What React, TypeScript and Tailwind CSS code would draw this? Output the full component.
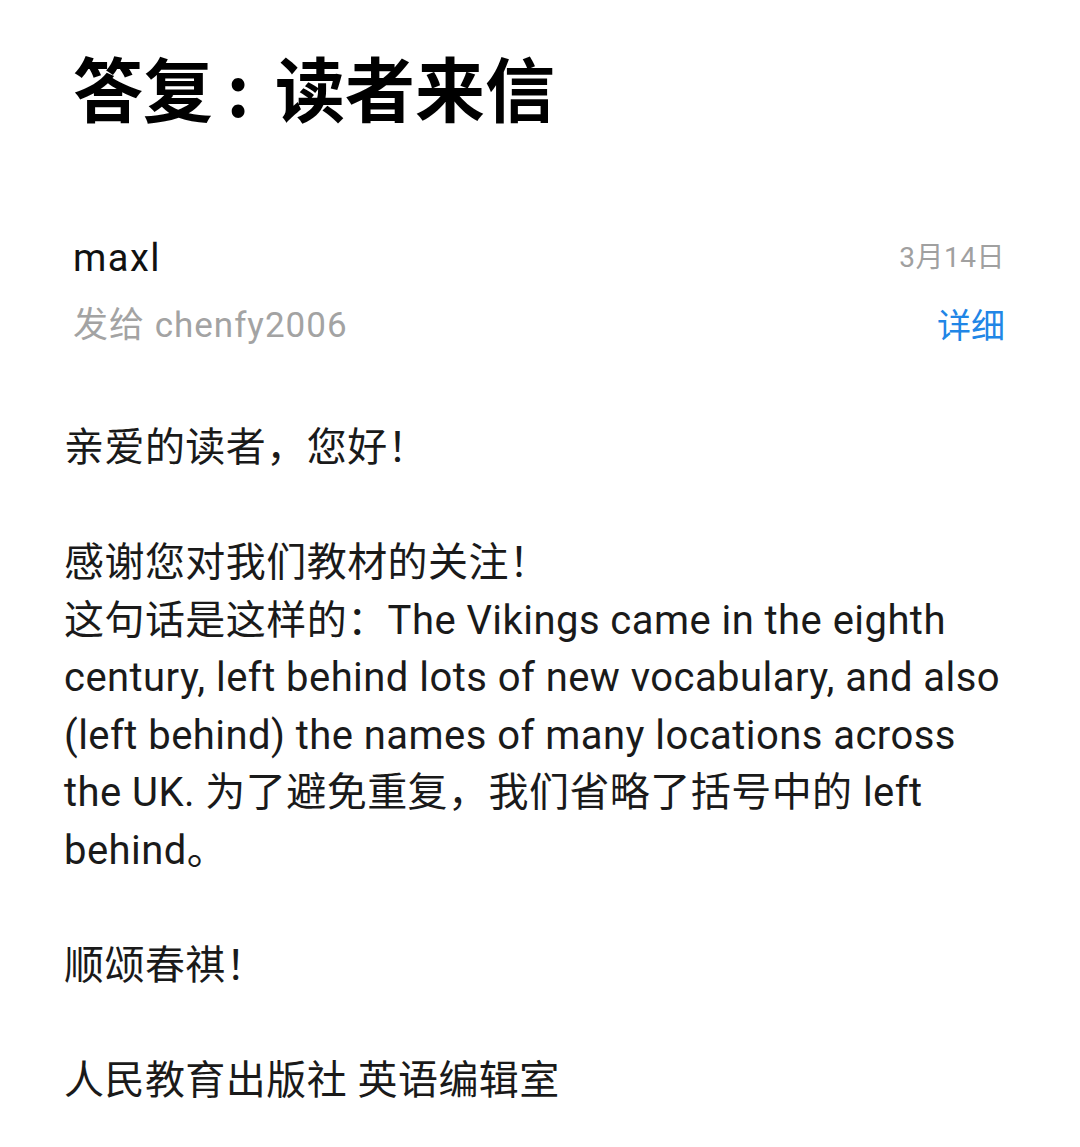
import React from 'react';

function App() {
  const styles = {
    page: 'min-h-screen w-full bg-white text-[#111]',
    font: "font-['Roboto','Noto_Sans_CJK_SC',sans-serif]",
    title: "pl-[73px] pt-[41px] text-[70px] leading-[92px] font-bold font-['Noto_Sans_CJK_SC',sans-serif] text-black",
    colon: 'inline-block w-[62px] pr-[12px] text-center',
    header: 'flex flex-row justify-between pl-[73px] pr-[75px] mt-[100px]',
    body: 'pl-[64px] pr-[40px] mt-[68px] text-[40px] leading-[57.5px] tracking-[0.45px] text-[#1a1a1a]',
  };

  return (
    <main className={`${styles.page} ${styles.font}`}>
      <h1 className={styles.title}>
        答复<span className={styles.colon}>:</span>读者来信
      </h1>

      <section className={styles.header}>
        <div className="flex flex-col">
          <div className="text-[38px] leading-[50px] tracking-[1.5px] text-[#111]">maxl</div>
          <div className="mt-[18px] text-[35px] leading-[50px] tracking-[1px] text-[#a3a3a3]">发给 chenfy2006</div>
        </div>
        <div className="flex flex-col items-end">
          <div className="text-[28px] leading-[50px] tracking-[0.5px] text-[#a0a0a0]">3月14日</div>
          <div className="mt-[18px] text-[34px] leading-[50px] text-[#2186e6]">详细</div>
        </div>
      </section>

      <section className={styles.body}>
        <p>亲爱的读者，您好！</p>
        <p>&nbsp;</p>
        <p>感谢您对我们教材的关注！</p>
        <p>
          这句话是这样的：The Vikings came in the eighth<br />
          century, left behind lots of new vocabulary, and also<br />
          (left behind) the names of many locations across<br />
          the UK. 为了避免重复，我们省略了括号中的 left<br />
          behind。
        </p>
        <p>&nbsp;</p>
        <p>顺颂春祺！</p>
        <p>&nbsp;</p>
        <p>人民教育出版社 英语编辑室</p>
      </section>
    </main>
  );
}

export default App;
